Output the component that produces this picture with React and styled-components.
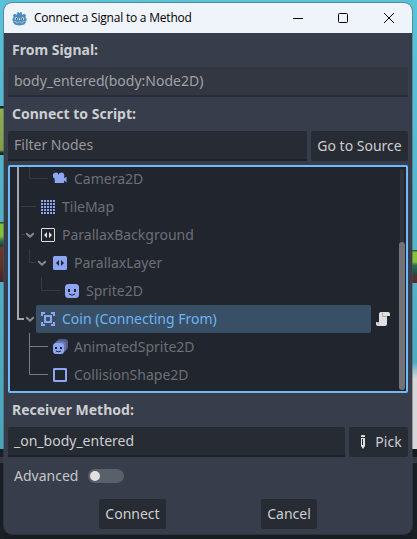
import React from "react";
import styled, { createGlobalStyle } from "styled-components";

const Global = createGlobalStyle`
  * { box-sizing: border-box; }
  html, body { margin: 0; height: 100%; overflow: hidden; }
  body { font-family: "Noto Sans", "Open Sans", sans-serif; font-size: 14px; }
`;

const Desktop = styled.main`
  width: 417px;
  height: 539px;
  padding: 3px 5px 5px 4px;
  background:
    linear-gradient(
      #5ac4da 0, #54b8cf 106px, #12262c 106px 108px, #8fae55 109px, #7f9f48 150px,
      #12262c 153px 155px, #52b3ca 155px, #50b0c7 222px, #33501f 222px 223px, #84c03c 224px 236px,
      #2d6b4c 241px, #2b3a35 246px, #6b3a2e 248px, #59302a 270px, #40242a 282px,
      #4fafc5 282px, #4aa5ba 449px, #1a1e25 449px 457px, #343843 457px 463px, #1a1e25 463px
    ) 0 0 / 4px 100% no-repeat,
    linear-gradient(
      #5ac4da 0, #52b5cc 250px, #3d5a2a 250px 251px, #84c03c 252px 262px,
      #2c7056 265px, #22483c 275px, #5a2c30 276px 283px,
      #50b1c8 283px, #4dabc2 362px, #d6d6d8 378px 449px,
      #171b21 449px 457px, #343843 457px 463px, #1a1e25 463px
    ) 100% 0 / 5px 100% no-repeat,
    linear-gradient(#58c1d8 0 20px, #171b22 520px);
`;

const Window = styled.section`
  width: 408px;
  height: 531px;
  display: flex;
  flex-direction: column;
  border-radius: 8px;
  overflow: hidden;
  background: #373d4a;
  box-shadow: 0 0 0 1px rgba(70, 80, 88, 0.45);
`;

const TitleBar = styled.header`
  height: 30px;
  flex: none;
  display: flex;
  align-items: center;
  padding: 0 18px 0 8px;
  background: #eff4fb;
  color: #000;
`;

const Title = styled.h1`
  margin: 0 auto 0 7px;
  font: 400 12px/16px "Open Sans", sans-serif;
  letter-spacing: -0.21px;
  white-space: nowrap;
`;

const WindowControls = styled.div`
  display: flex;
  gap: 35px;
  margin-top: -1px;
  svg { display: block; }
  svg:last-child { margin-left: 1px; }
`;

const Body = styled.div`
  flex: 1;
  display: flex;
  flex-direction: column;
  padding: 4px;
`;

const Label = styled.div`
  height: ${(p) => p.$height || 34}px;
  flex: none;
  line-height: ${(p) => p.$line || 34}px;
  padding: 0 4px;
  font-weight: 700;
  color: #cdced1;
  white-space: nowrap;
`;

const Row = styled.div`
  display: flex;
  flex: none;
  gap: 4px;
`;

const Field = styled.div`
  flex: 1;
  height: 30px;
  padding: 0 6px;
  line-height: 27px;
  border-radius: 2px 2px 0 0;
  border-bottom: 2px solid ${(p) => (p.$readOnly ? "#282c36" : "#1d2128")};
  background: ${(p) => (p.$readOnly ? "#323742" : "#262b34")};
  color: ${(p) => p.$color || "#cdcecf"};
  white-space: nowrap;
`;

const Button = styled.button`
  width: ${(p) => p.$width}px;
  height: 30px;
  display: flex;
  align-items: center;
  justify-content: center;
  gap: 4px;
  padding: 0;
  border: 0;
  border-radius: 2px;
  background: #262b34;
  color: #cdcecf;
  font: inherit;
  line-height: 28px;
  white-space: nowrap;
`;

const Tree = styled.div`
  position: relative;
  flex: none;
  height: 228px;
  margin-top: 4px;
  border: 2px solid #70bafa;
  border-radius: 2px;
  background: #21252e;
  overflow: hidden;
`;

const Items = styled.div`
  margin-top: -2px;
`;

const Item = styled.div`
  height: 28px;
  display: flex;
  align-items: center;
  padding-left: ${(p) => 14 + p.$level * 12}px;
`;

const Arrow = styled.span`
  width: 12px;
  height: 16px;
  flex: none;
  svg { display: block; }
`;

const ItemCell = styled.div`
  width: ${(p) => (p.$selected ? "335px" : "auto")};
  height: 28px;
  display: flex;
  align-items: center;
  gap: 6px;
  padding-left: 4px;
  border-radius: 2px;
  background: ${(p) => (p.$selected ? "#394f66" : "transparent")};
  color: ${(p) => (p.$selected ? "#6cb5f3" : "#6c6f75")};
  line-height: 28px;
  white-space: nowrap;
  svg { display: block; flex: none; }
`;

const ScriptSlot = styled.span`
  margin-left: 4px;
  svg { display: block; }
`;

const Guides = styled.svg`
  position: absolute;
  left: 0;
  top: 0;
`;

const ScrollTrack = styled.div`
  position: absolute;
  right: 2px;
  top: 2px;
  width: 4px;
  height: 220px;
  border-radius: 2px;
  background: #30343c;
`;

const ScrollThumb = styled.div`
  position: absolute;
  left: -1px;
  top: 73px;
  width: 6px;
  height: 148px;
  border-radius: 3px;
  background: #717277;
`;

const AdvancedRow = styled.div`
  display: flex;
  flex: none;
  align-items: center;
  height: 38px;
  padding-left: 6px;
  gap: 10px;
  line-height: 20px;
  color: #c4c6c9;
`;

const Toggle = styled.span`
  width: 36px;
  height: 14px;
  display: flex;
  align-items: center;
  padding-left: 2px;
  border-radius: 7px;
  background: #5a6069;
  &::before {
    content: "";
    width: 10px;
    height: 10px;
    border-radius: 50%;
    background: #e0e0e0;
  }
`;

const Actions = styled.footer`
  display: flex;
  gap: 95px;
  padding: 4px 0 0 91px;
`;

const BLUE = "#8da5f3";

const Icon = ({ children, ...rest }) => (
  <svg width="16" height="16" viewBox="0 0 16 16" {...rest}>{children}</svg>
);

const CameraIcon = () => (
  <Icon fill={BLUE}>
    <path d="M9.500 1.500a3 3 0 0 0-2.900 2.300A2.600 2.600 0 0 0 1 5.300c0 1.100.7 2 1.700 2.400V11c0 .6.4 1 1 1h7.500c.6 0 1-.4 1-1V9.600L14.500 11.500V5.800L12.200 7.300V5.400A3 3 0 0 0 9.500 1.500z" />
  </Icon>
);

const TileMapIcon = () => (
  <Icon fill={BLUE}>
    {[1, 4, 7, 10, 13].map((y) =>
      [1, 4, 7, 10, 13].map((x) => <rect key={`${x}-${y}`} x={x} y={y} width="2" height="2" />)
    )}
  </Icon>
);

const ParallaxBackgroundIcon = () => (
  <Icon>
    <rect x="1.500" y="1.500" width="13" height="13" rx=".5" fill="none" stroke="#e0e0e0" />
    <path d="M7 5v6L4 8zM9 5v6l3-3z" fill="#e0e0e0" />
  </Icon>
);

const ParallaxLayerIcon = () => (
  <Icon>
    <rect x="1" y="1" width="14" height="14" rx="1.500" fill={BLUE} />
    <path d="M7 5v6L4 8zM9 5v6l3-3z" fill="#21252e" />
  </Icon>
);

const SpriteIcon = () => (
  <Icon>
    <rect x="1" y="1" width="14" height="14" rx="3.500" fill={BLUE} />
    <path d="M4 6h2v3H4zM10 6h2v3h-2z" fill="#21252e" />
    <path d="M5 11q3 2.400 6 0" fill="none" stroke="#21252e" />
  </Icon>
);

const AnimatedSpriteIcon = () => (
  <Icon>
    <rect x="5" y="0" width="11" height="11" rx="3" fill="#4f5c87" />
    <rect x="3" y="2" width="11" height="11" rx="3" fill="#6576ac" />
    <rect x="1" y="4" width="11" height="11" rx="3" fill={BLUE} />
    <path d="M3 8h2v2H3zM8 8h2v2H8z" fill="#21252e" />
    <path d="M4 12q2.500 1.600 5 0" fill="none" stroke="#21252e" />
  </Icon>
);

const AreaIcon = () => (
  <Icon fill="none" stroke={BLUE} strokeWidth="2">
    <path d="M2 5V2h3M11 2h3v3M14 11v3h-3M5 14H2v-3" />
    <rect x="5" y="5" width="6" height="6" />
  </Icon>
);

const CollisionIcon = () => (
  <Icon>
    <rect x="2" y="2" width="12" height="12" rx=".3" fill="none" stroke={BLUE} strokeWidth="2" />
  </Icon>
);

const ScriptIcon = () => (
  <Icon>
    <path d="M6 1h7a2 2 0 0 1 2 2v2h-3v8a2 2 0 0 1-2 2H3a2 2 0 0 1-2-2v-2h3V3a2 2 0 0 1 2-2z" fill="#e0e0e0" />
    <path d="M7.500 1.500v4H12M1.500 11.500h2v2" fill="none" stroke="#a8a9ac" />
  </Icon>
);

const PencilIcon = () => (
  <Icon>
    <path d="M6 2a1 1 0 0 1 1-1h2a1 1 0 0 1 1 1v1H6zM6 4h4v8l-2 3-2-3z" fill="#e0e0e0" />
    <path d="M7.500 5v6" stroke="#262b34" />
  </Icon>
);

const GodotIcon = () => (
  <svg width="15" height="15" viewBox="0 0 16 16">
    <path d="M1 4.500L3 3l1.500 1 1-.5L5.300 1.500 7 1l.7 1.500h.6L9 1l1.700.5-.2 2 1 .5L13 3l2 1.500-.5 1.700v1.300l1 .5v2L15 10.500c0 3-2.500 5-7 5s-7-2-7-5L.5 10V8l1-.5V6.200z" fill="#478cbf" />
    <circle cx="4.600" cy="8.300" r="1.600" fill="#fff" />
    <circle cx="11.400" cy="8.300" r="1.600" fill="#fff" />
    <circle cx="4.800" cy="8.400" r="1" fill="#414042" />
    <circle cx="11.200" cy="8.400" r="1" fill="#414042" />
    <path d="M8 7.800v2" stroke="#fff" />
    <path d="M1.500 11l3 .5.2 1.200h1.800l.2-1h2.600l.2 1h1.800l.2-1.200 3-.5" fill="none" stroke="#c8ddec" strokeWidth=".6" />
  </svg>
);

const Chevron = () => (
  <svg width="12" height="16" viewBox="0 0 12 16">
    <path d="M2.800 6.700L6 9.800l3.200-3.100" fill="none" stroke="#85878b" strokeWidth="2" strokeLinecap="round" strokeLinejoin="round" />
  </svg>
);

const NODES = [
  { name: "Camera2D", level: 2, icon: CameraIcon },
  { name: "TileMap", level: 1, icon: TileMapIcon },
  { name: "ParallaxBackground", level: 1, icon: ParallaxBackgroundIcon, open: true },
  { name: "ParallaxLayer", level: 2, icon: ParallaxLayerIcon, open: true },
  { name: "Sprite2D", level: 3, icon: SpriteIcon },
  { name: "Coin (Connecting From)", level: 1, icon: AreaIcon, open: true, selected: true },
  { name: "AnimatedSprite2D", level: 2, icon: AnimatedSpriteIcon },
  { name: "CollisionShape2D", level: 2, icon: CollisionIcon },
];

function NodeTree() {
  return (
    <Tree>
      <Guides width="396" height="224" fill="none">
        <path d="M19.500 0v11.500H38M11 39.500h15M11 67.500h4M19.500 82v13.500H26M31.500 110v13.500H50" stroke="#373a41" />
        <path d="M19.500 166v41.500H38M19.500 179.500H38" stroke="#777a80" />
        <path d="M8 0v152h6" stroke="#a5a7aa" strokeWidth="2" />
      </Guides>
      <Items>
        {NODES.map(({ name, level, icon: NodeIcon, open, selected }) => (
          <Item key={name} $level={level - 1}>
            <Arrow>{open && <Chevron />}</Arrow>
            <ItemCell $selected={selected}>
              <NodeIcon />
              {name}
            </ItemCell>
            {selected && <ScriptSlot><ScriptIcon /></ScriptSlot>}
          </Item>
        ))}
      </Items>
      <ScrollTrack><ScrollThumb /></ScrollTrack>
    </Tree>
  );
}

export default function App() {
  return (
    <Desktop>
      <Global />
      <Window>
        <TitleBar>
          <GodotIcon />
          <Title>Connect a Signal to a Method</Title>
          <WindowControls>
            <svg width="10" height="10"><path d="M0 5.500h10" stroke="#000" /></svg>
            <svg width="10" height="10"><rect x=".5" y=".5" width="9" height="9" rx="1" fill="none" stroke="#000" /></svg>
            <svg width="10" height="10"><path d="M0 0l10 10M10 0L0 10" stroke="#000" /></svg>
          </WindowControls>
        </TitleBar>
        <Body>
          <Label $height={30} $line={26}>From Signal:</Label>
          <Row>
            <Field $readOnly $color="#a0a2a7">body_entered(body:Node2D)</Field>
          </Row>
          <Label>Connect to Script:</Label>
          <Row>
            <Field $color="#97999d">Filter Nodes</Field>
            <Button $width={97}>Go to Source</Button>
          </Row>
          <NodeTree />
          <Label>Receiver Method:</Label>
          <Row>
            <Field>_on_body_entered</Field>
            <Button $width={59}><PencilIcon />Pick</Button>
          </Row>
          <AdvancedRow>Advanced<Toggle /></AdvancedRow>
          <Actions>
            <Button $width={67}>Connect</Button>
            <Button $width={56}>Cancel</Button>
          </Actions>
        </Body>
      </Window>
    </Desktop>
  );
}
